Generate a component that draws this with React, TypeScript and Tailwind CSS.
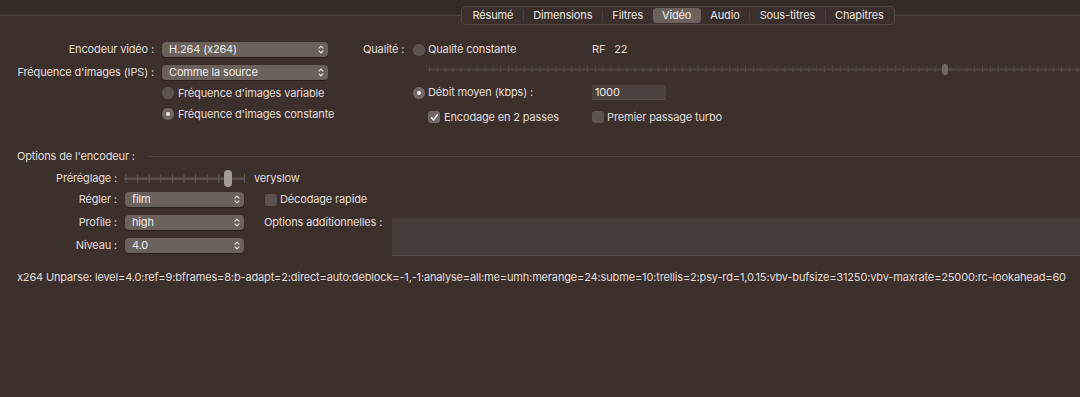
import React from "react";

type Tab = { label: string; active?: boolean; sep?: boolean };

const TABS: Tab[] = [
  { label: "Résumé", sep: true },
  { label: "Dimensions", sep: true },
  { label: "Filtres" },
  { label: "Vidéo", active: true },
  { label: "Audio", sep: true },
  { label: "Sous-titres", sep: true },
  { label: "Chapitres" },
];

const UNPARSE =
  "x264 Unparse: level=4.0:ref=9:bframes=8:b-adapt=2:direct=auto:deblock=-1,-1:analyse=all:me=umh:merange=24:subme=10:trellis=2:psy-rd=1,0.15:vbv-bufsize=31250:vbv-maxrate=25000:rc-lookahead=60";

function Chevrons() {
  return (
    <svg width="6" height="9" viewBox="0 0 6 9" fill="none" className="shrink-0">
      <path d="M1 3.2 L3 1.2 L5 3.2" stroke="#ece8e6" strokeWidth="1.1" strokeLinecap="round" strokeLinejoin="round" />
      <path d="M1 5.8 L3 7.8 L5 5.8" stroke="#ece8e6" strokeWidth="1.1" strokeLinecap="round" strokeLinejoin="round" />
    </svg>
  );
}

function Popup({ value, className }: { value: string; className: string }) {
  return (
    <div
      className={
        "flex h-[15px] items-center justify-between rounded-[4px] bg-[#6a605c] pl-[7px] pr-[4px] text-[#f0ecea] shadow-[0_0.5px_1px_rgba(0,0,0,0.35)] " +
        className
      }
    >
      <span>{value}</span>
      <Chevrons />
    </div>
  );
}

function Radio({ checked }: { checked?: boolean }) {
  return (
    <span
      className={
        "flex h-[12px] w-[12px] shrink-0 items-center justify-center rounded-full shadow-[inset_0_0_0_0.5px_rgba(255,255,255,0.08)] " +
        (checked ? "bg-[#6f6562]" : "bg-[#5c524f]")
      }
    >
      {checked ? <span className="h-[4px] w-[4px] rounded-full bg-[#f2efee]" /> : null}
    </span>
  );
}

function Checkbox({ checked }: { checked?: boolean }) {
  return (
    <span
      className={
        "flex h-[12px] w-[12px] shrink-0 items-center justify-center rounded-[3px] " +
        (checked ? "bg-[#6f6562]" : "bg-[#5c524f]")
      }
    >
      {checked ? (
        <svg width="9" height="9" viewBox="0 0 9 9" fill="none">
          <path d="M1.6 4.8 L3.6 6.9 L7.4 1.8" stroke="#f4f1f0" strokeWidth="1.5" strokeLinecap="round" strokeLinejoin="round" />
        </svg>
      ) : null}
    </span>
  );
}

function QualitySlider() {
  const ticks = Array.from({ length: 84 }, (_, i) => i * 7.9 + 1);
  return (
    <svg width="652" height="15" viewBox="0 0 652 15" className="block">
      <rect x="0" y="6.5" width="652" height="2" fill="#4f4643" />
      {ticks.map((x) => (
        <rect key={x} x={x} y="4.5" width="1" height="6" fill="#544a47" />
      ))}
      <rect x="514" y="2" width="6" height="11" rx="3" fill="#716865" />
    </svg>
  );
}

function PresetSlider() {
  const ticks = Array.from({ length: 10 }, (_, i) => 1.5 + i * 11.6);
  return (
    <svg width="121" height="19" viewBox="0 0 121 19" className="block">
      <rect x="0" y="8.5" width="121" height="2.5" rx="1" fill="#5a504d" />
      {ticks.map((x) => (
        <rect key={x} x={x} y="5" width="1" height="9" fill="#625855" />
      ))}
      <rect x="100" y="1" width="8" height="17" rx="4" fill="#a29a97" />
      <rect x="120" y="5" width="1" height="9" fill="#625855" />
    </svg>
  );
}

export default function App() {
  return (
    <div className="h-[397px] w-[1080px] overflow-hidden bg-[#3c302c] font-['Inter','Liberation_Sans',sans-serif] text-[11px] leading-none tracking-[-0.15px] text-[#e2dcd9]">
      {/* tab bar */}
      <div className="flex h-[30px] items-center bg-[linear-gradient(to_bottom,#342a26_14px,#3c302c_14px)]">
        <div className="h-px w-[461px] bg-[#4c4240]" />
        <div className="flex h-[19px] items-center rounded-[5px] border border-[#514744] bg-[#3a2f2c] px-px text-[#e8e3e0]">
          {TABS.map((t) => (
            <div key={t.label} className="flex items-center">
              <div
                className={
                  "flex h-[15px] items-center rounded-[4px] px-[9.5px] " +
                  (t.active ? "bg-[#6b625e] text-[#f4f1f0]" : "")
                }
              >
                {t.label}
              </div>
              {t.sep ? <div className="h-[11px] w-px bg-[#4a403d]" /> : null}
            </div>
          ))}
        </div>
        <div className="h-px flex-1 bg-[#4c4240]" />
      </div>

      {/* video settings */}
      <div className="mt-[12px] flex">
        <div className="w-[363px] shrink-0">
          <div className="flex h-[15px] items-center">
            <span className="w-[154px] text-right">Encodeur vidéo :</span>
            <Popup value="H.264 (x264)" className="ml-[8px] w-[166px]" />
          </div>
          <div className="mt-[8px] flex h-[15px] items-center">
            <span className="w-[154px] text-right">Fréquence d'images (IPS) :</span>
            <Popup value="Comme la source" className="ml-[8px] w-[166px]" />
          </div>
          <div className="ml-[162px] mt-[6px] flex h-[14px] items-center gap-[4px]">
            <Radio />
            <span>Fréquence d'images variable</span>
          </div>
          <div className="ml-[162px] mt-[7px] flex h-[14px] items-center gap-[4px]">
            <Radio checked />
            <span>Fréquence d'images constante</span>
          </div>
        </div>

        <div className="min-w-0 flex-1">
          <div className="flex h-[15px] items-center">
            <span className="w-[50px]">Qualité :</span>
            <Radio />
            <span className="ml-[3px] w-[164px]">Qualité constante</span>
            <span>RF</span>
            <span className="ml-[9px]">22</span>
          </div>
          <div className="ml-[65px] mt-[5px] h-[15px]">
            <QualitySlider />
          </div>
          <div className="mt-[8px] flex h-[15px] items-center">
            <span className="ml-[50px]">
              <Radio checked />
            </span>
            <span className="ml-[3px] w-[164px]">Débit moyen (kbps) :</span>
            <div className="flex h-[15px] w-[74px] items-center bg-[#4b413e] pl-[3px] text-[#eeeae8] shadow-[inset_0_-1px_0_rgba(255,255,255,0.06)]">
              1000
            </div>
          </div>
          <div className="ml-[65px] mt-[10px] flex h-[14px] items-center">
            <Checkbox checked />
            <span className="ml-[4px] w-[148px]">Encodage en 2 passes</span>
            <Checkbox />
            <span className="ml-[3px]">Premier passage turbo</span>
          </div>
        </div>
      </div>

      {/* encoder options */}
      <div className="mt-[25px] flex h-[14px] items-center pl-[17px]">
        <span>Options de l'encodeur :</span>
        <div className="ml-[12px] h-px flex-1 bg-[#4c4240]" />
      </div>

      <div className="mt-[6px] flex h-[19px] items-center">
        <span className="w-[117px] text-right">Préréglage :</span>
        <span className="ml-[7px]">
          <PresetSlider />
        </span>
        <span className="ml-[9px]">veryslow</span>
      </div>

      <div className="mt-[4px] flex">
        <div className="w-[264px] shrink-0">
          <div className="flex h-[15px] items-center">
            <span className="w-[117px] text-right">Régler :</span>
            <Popup value="film" className="ml-[8px] w-[119px]" />
          </div>
          <div className="mt-[8px] flex h-[15px] items-center">
            <span className="w-[117px] text-right">Profile :</span>
            <Popup value="high" className="ml-[8px] w-[119px]" />
          </div>
          <div className="mt-[8px] flex h-[15px] items-center">
            <span className="w-[117px] text-right">Niveau :</span>
            <Popup value="4.0" className="ml-[8px] w-[119px]" />
          </div>
        </div>
        <div className="min-w-0 flex-1">
          <div className="flex h-[15px] items-center pl-px">
            <Checkbox />
            <span className="ml-[3px]">Décodage rapide</span>
          </div>
          <div className="mt-[8px] flex items-start">
            <span className="flex h-[15px] w-[128px] items-center">Options additionnelles :</span>
            <div className="mt-[3px] h-[38px] flex-1 bg-[#463c39] shadow-[inset_0_-1px_0_rgba(255,255,255,0.08)]" />
          </div>
        </div>
      </div>

      <div className="mt-[14px] flex h-[14px] items-center whitespace-nowrap pl-[17px]">{UNPARSE}</div>
    </div>
  );
}
